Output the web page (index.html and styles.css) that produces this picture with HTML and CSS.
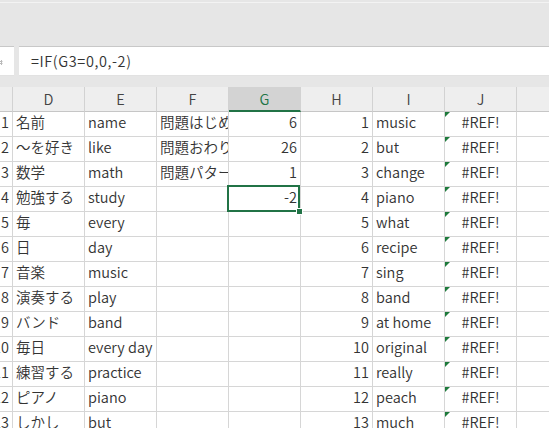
FILE: index.html
```html
<!DOCTYPE html>
<html lang="ja">
<head>
<meta charset="utf-8">
<link rel="stylesheet" href="styles.css">
</head>
<body>
<div class="top"><div class="top-line"></div></div>
<div class="fbar">
  <div class="namebox"><svg class="nb-icon" width="6" height="8" viewBox="0 0 6 8"><path d="M0 3.5h3.5M0 5.5h3.5M2.5 2v5" stroke="#b9b9b9" stroke-width="1" fill="none"/></svg></div>
  <div class="formula">=IF(G3=0,0,-2)</div>
</div>
<div class="gap"></div>
<div class="grid">
  <div class="hd"></div><div class="hd">D</div><div class="hd">E</div><div class="hd">F</div><div class="hd sel">G</div><div class="hd">H</div><div class="hd">I</div><div class="hd">J</div><div class="hd last"></div>

  <div class="c num">1</div><div class="c">名前</div><div class="c">name</div><div class="c">問題はじめ</div><div class="c num">6</div><div class="c num">1</div><div class="c">music</div><div class="c ctr err">#REF!</div><div class="c last"></div>
  <div class="c num">2</div><div class="c">～を好き</div><div class="c">like</div><div class="c">問題おわり</div><div class="c num">26</div><div class="c num">2</div><div class="c">but</div><div class="c ctr err">#REF!</div><div class="c last"></div>
  <div class="c num">3</div><div class="c">数学</div><div class="c">math</div><div class="c">問題パターン</div><div class="c num">1</div><div class="c num">3</div><div class="c">change</div><div class="c ctr err">#REF!</div><div class="c last"></div>
  <div class="c num">4</div><div class="c">勉強する</div><div class="c">study</div><div class="c"></div><div class="c num active">-2<span class="handle"></span></div><div class="c num">4</div><div class="c">piano</div><div class="c ctr err">#REF!</div><div class="c last"></div>
  <div class="c num">5</div><div class="c">毎</div><div class="c">every</div><div class="c"></div><div class="c"></div><div class="c num">5</div><div class="c">what</div><div class="c ctr err">#REF!</div><div class="c last"></div>
  <div class="c num">6</div><div class="c">日</div><div class="c">day</div><div class="c"></div><div class="c"></div><div class="c num">6</div><div class="c">recipe</div><div class="c ctr err">#REF!</div><div class="c last"></div>
  <div class="c num">7</div><div class="c">音楽</div><div class="c">music</div><div class="c"></div><div class="c"></div><div class="c num">7</div><div class="c">sing</div><div class="c ctr err">#REF!</div><div class="c last"></div>
  <div class="c num">8</div><div class="c">演奏する</div><div class="c">play</div><div class="c"></div><div class="c"></div><div class="c num">8</div><div class="c">band</div><div class="c ctr err">#REF!</div><div class="c last"></div>
  <div class="c num">9</div><div class="c">バンド</div><div class="c">band</div><div class="c"></div><div class="c"></div><div class="c num">9</div><div class="c">at home</div><div class="c ctr err">#REF!</div><div class="c last"></div>
  <div class="c num">10</div><div class="c">毎日</div><div class="c">every day</div><div class="c"></div><div class="c"></div><div class="c num">10</div><div class="c">original</div><div class="c ctr err">#REF!</div><div class="c last"></div>
  <div class="c num">11</div><div class="c">練習する</div><div class="c">practice</div><div class="c"></div><div class="c"></div><div class="c num">11</div><div class="c">really</div><div class="c ctr err">#REF!</div><div class="c last"></div>
  <div class="c num">12</div><div class="c">ピアノ</div><div class="c">piano</div><div class="c"></div><div class="c"></div><div class="c num">12</div><div class="c">peach</div><div class="c ctr err">#REF!</div><div class="c last"></div>
  <div class="c num">13</div><div class="c">しかし</div><div class="c">but</div><div class="c"></div><div class="c"></div><div class="c num">13</div><div class="c">much</div><div class="c ctr err">#REF!</div><div class="c last"></div>
</div>
</body>
</html>
```

FILE: styles.css
```css
* { box-sizing: border-box; margin: 0; padding: 0; }
html, body { width: 549px; height: 428px; overflow: hidden; }
body {
  background: #ffffff;
  font-family: "Noto Sans CJK JP", "Noto Sans", sans-serif;
  font-weight: 350;
  color: #333333;
}
.top { height: 46px; background: #e6e6e6; padding-top: 2px; }
.top-line { height: 1px; background: #f3f3f3; }

.fbar { display: flex; height: 30px; background: #e6e6e6; gap: 5px; }
.namebox, .formula {
  background: #ffffff;
  border-top: 1px solid #c8c8c8;
  border-bottom: 1px solid #e2e2e2;
}
.namebox { width: 14px; display: flex; align-items: center; overflow: hidden; }
.nb-icon { display: block; margin-left: -1px; margin-top: 2px; }
.formula {
  flex: 1;
  padding-left: 12px;
  font-size: 14.5px;
  letter-spacing: 0.6px;
  line-height: 27px;
  color: #333333;
}
.gap { height: 11px; background: #e6e6e6; }

.grid {
  display: grid;
  grid-template-columns: 13px repeat(7, 72px) 1fr;
  grid-auto-rows: 25px;
}
.hd {
  background: #eeeeee;
  border-right: 1px solid #d2d2d2;
  border-bottom: 1px solid #c6c6c6;
  text-align: center;
  font-size: 14.5px;
  line-height: 24px;
  color: #444444;
}
.hd.sel {
  background: #d3d3d3;
  color: #217346;
  border-bottom: 2px solid #217346;
}
.hd.last, .c.last { border-right: none; }
.c {
  border-right: 1px solid #d6d6d6;
  border-bottom: 1px solid #d6d6d6;
  padding: 0 3px 4px 3px;
  font-size: 14.5px;
  line-height: 20px;
  white-space: nowrap;
  overflow: hidden;
  display: flex;
  align-items: flex-end;
  position: relative;
}
.num { justify-content: flex-end; padding-right: 3px; }
.ctr { justify-content: center; }
.err::before {
  content: "";
  position: absolute;
  top: 0;
  left: 0;
  border-top: 5px solid #1e7a3c;
  border-right: 5px solid transparent;
}
.active { overflow: visible; z-index: 2; }
.active::after {
  content: "";
  position: absolute;
  top: -2px;
  left: -2px;
  right: 0;
  bottom: -1px;
  border: 2px solid #217346;
}
.handle {
  position: absolute;
  right: -3px;
  bottom: -4px;
  width: 7px;
  height: 7px;
  background: #217346;
  border: 1px solid #ffffff;
  z-index: 3;
}
```
